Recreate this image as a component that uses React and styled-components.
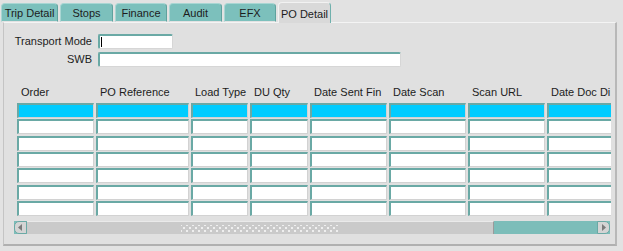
import React from 'react';
import styled, { createGlobalStyle } from 'styled-components';

const GlobalStyle = createGlobalStyle`
  body {
    margin: 0;
    background: #e2e2e2;
    font-family: "Liberation Sans", Arial, sans-serif;
    font-size: 11px;
    color: #1c1c1c;
  }
`;

const Screen = styled.div`
  width: 623px;
  height: 251px;
  overflow: hidden;
  background: #e2e2e2;
`;

const TabBar = styled.div`
  display: flex;
  align-items: flex-end;
  gap: 2px;
  height: 22px;
  padding-left: 1px;
`;

const Tab = styled.div`
  box-sizing: border-box;
  width: ${(p) => p.$w}px;
  height: ${(p) => (p.$active ? 21 : 19)}px;
  margin-bottom: ${(p) => (p.$active ? -1 : 0)}px;
  display: flex;
  align-items: center;
  justify-content: center;
  padding-top: 1px;
  white-space: nowrap;
  border-radius: 4px 4px 0 0;
  background: ${(p) => (p.$active ? '#d9d9d9' : '#7cc0bc')};
  border-top: 1px solid ${(p) => (p.$active ? '#f2f2f2' : '#a9d6d3')};
  border-left: 1px solid ${(p) => (p.$active ? '#f2f2f2' : '#a9d6d3')};
  border-right: 1px solid ${(p) => (p.$active ? '#6fb0ac' : '#5fa29e')};
  border-bottom: ${(p) => (p.$active ? 'none' : '1px solid #e2e2e2')};
  position: relative;
  z-index: ${(p) => (p.$active ? 2 : 1)};
  font-size: 11px;
  color: #1c1c1c;
`;

const Panel = styled.div`
  box-sizing: border-box;
  width: 614px;
  height: 224px;
  margin-left: 3px;
  border-top: 1px solid #f4f4f4;
  border-left: 1px solid #c4c4c4;
  border-right: 2px solid #b8b8b8;
  border-bottom: 2px solid #b0b0b0;
  background: #e0e0e0;
  padding-top: 11px;
`;

const Form = styled.div`
  display: grid;
  grid-template-columns: 88px auto;
  column-gap: 6px;
  row-gap: 3px;
  justify-content: start;
`;

const Label = styled.label`
  text-align: right;
  line-height: 15px;
  font-size: 11px;
`;

const Field = styled.div`
  box-sizing: border-box;
  width: ${(p) => p.$w}px;
  height: 15px;
  background: #fff;
  border-top: 2px solid #6aa9a5;
  border-left: 2px solid #6aa9a5;
  border-right: 1px solid #d6d6d6;
  border-bottom: 1px solid #d6d6d6;
  border-radius: 2px;
  padding: 0 0 0 1px;
  display: flex;
  align-items: center;
`;

const Caret = styled.span`
  width: 1px;
  height: 10px;
  background: #000;
`;

const Grid = styled.div`
  margin: 18px 0 0 13px;
  width: 594px;
  overflow: hidden;
`;

const Row = styled.div`
  display: grid;
  grid-template-columns: 77px 93px 57px 58px 77px 77px 77px 77px;
  column-gap: 2px;
  height: ${(p) => (p.$head ? 16 : 15)}px;
  margin-bottom: ${(p) => (p.$head ? 2 : 1.34)}px;
`;

const Head = styled.div`
  padding-left: 4px;
  line-height: 14px;
  white-space: nowrap;
  font-size: 11px;
`;

const Cell = styled.div`
  box-sizing: border-box;
  background: ${(p) => (p.$selected ? '#00ccff' : '#fff')};
  border-top: 2px solid #6aa9a5;
  border-left: 2px solid #6aa9a5;
  border-right: 1px solid #d2d2d2;
  border-bottom: 1px solid #d2d2d2;
`;

const Scrollbar = styled.div`
  box-sizing: border-box;
  display: flex;
  width: 596px;
  height: 13px;
  margin: 4px 0 0 10px;
  background: #7cbdb9;
`;

const ArrowBtn = styled.div`
  box-sizing: border-box;
  width: 13px;
  height: 13px;
  display: flex;
  align-items: center;
  justify-content: center;
  background: #d4d4d4;
  border: 1px solid #6aa9a5;
  border-radius: ${(p) => (p.$left ? '5px 0 0 5px' : '0 5px 5px 0')};
  svg {
    display: block;
  }
`;

const Thumb = styled.div`
  box-sizing: border-box;
  width: 467px;
  height: 13px;
  background: #cacaca;
  border-top: 1px solid #eaeaea;
  border-right: 1px solid #9a9a9a;
  display: flex;
  align-items: center;
  justify-content: center;
`;

const Track = styled.div`
  flex: 1;
`;

const Grip = styled.div`
  width: 158px;
  height: 7px;
  background-image: radial-gradient(circle, #f4f4f4 0.8px, transparent 1.2px),
    radial-gradient(circle, #f4f4f4 0.8px, transparent 1.2px);
  background-size: 6px 6px;
  background-position: 0 0, 3px 3px;
  opacity: 0.9;
`;

const tabs = [
  { name: 'Trip Detail', w: 57 },
  { name: 'Stops', w: 53 },
  { name: 'Finance', w: 52 },
  { name: 'Audit', w: 53 },
  { name: 'EFX', w: 52 },
  { name: 'PO Detail', w: 53, active: true },
];

const columns = [
  'Order',
  'PO Reference',
  'Load Type',
  'DU Qty',
  'Date Sent Fin',
  'Date Scan',
  'Scan URL',
  'Date Doc Di',
];

const rows = [0, 1, 2, 3, 4, 5, 6];

const App = () => (
  <>
    <GlobalStyle />
    <Screen>
      <TabBar>
        {tabs.map((t) => (
          <Tab key={t.name} $w={t.w} $active={t.active}>
            {t.name}
          </Tab>
        ))}
      </TabBar>
      <Panel>
        <Form>
          <Label>Transport Mode</Label>
          <Field $w={75}>
            <Caret />
          </Field>
          <Label>SWB</Label>
          <Field $w={303} />
        </Form>
        <Grid>
          <Row $head>
            {columns.map((c) => (
              <Head key={c}>{c}</Head>
            ))}
          </Row>
          {rows.map((r) => (
            <Row key={r}>
              {columns.map((c) => (
                <Cell key={c} $selected={r === 0} />
              ))}
            </Row>
          ))}
        </Grid>
        <Scrollbar>
          <ArrowBtn $left>
            <svg width="5" height="7" viewBox="0 0 5 7">
              <path d="M4 0 L0 3.5 L4 7 Z" fill="#7a7a7a" />
            </svg>
          </ArrowBtn>
          <Thumb>
            <Grip />
          </Thumb>
          <Track />
          <ArrowBtn>
            <svg width="5" height="7" viewBox="0 0 5 7">
              <path d="M1 0 L5 3.5 L1 7 Z" fill="#7a7a7a" />
            </svg>
          </ArrowBtn>
        </Scrollbar>
      </Panel>
    </Screen>
  </>
);

export default App;
